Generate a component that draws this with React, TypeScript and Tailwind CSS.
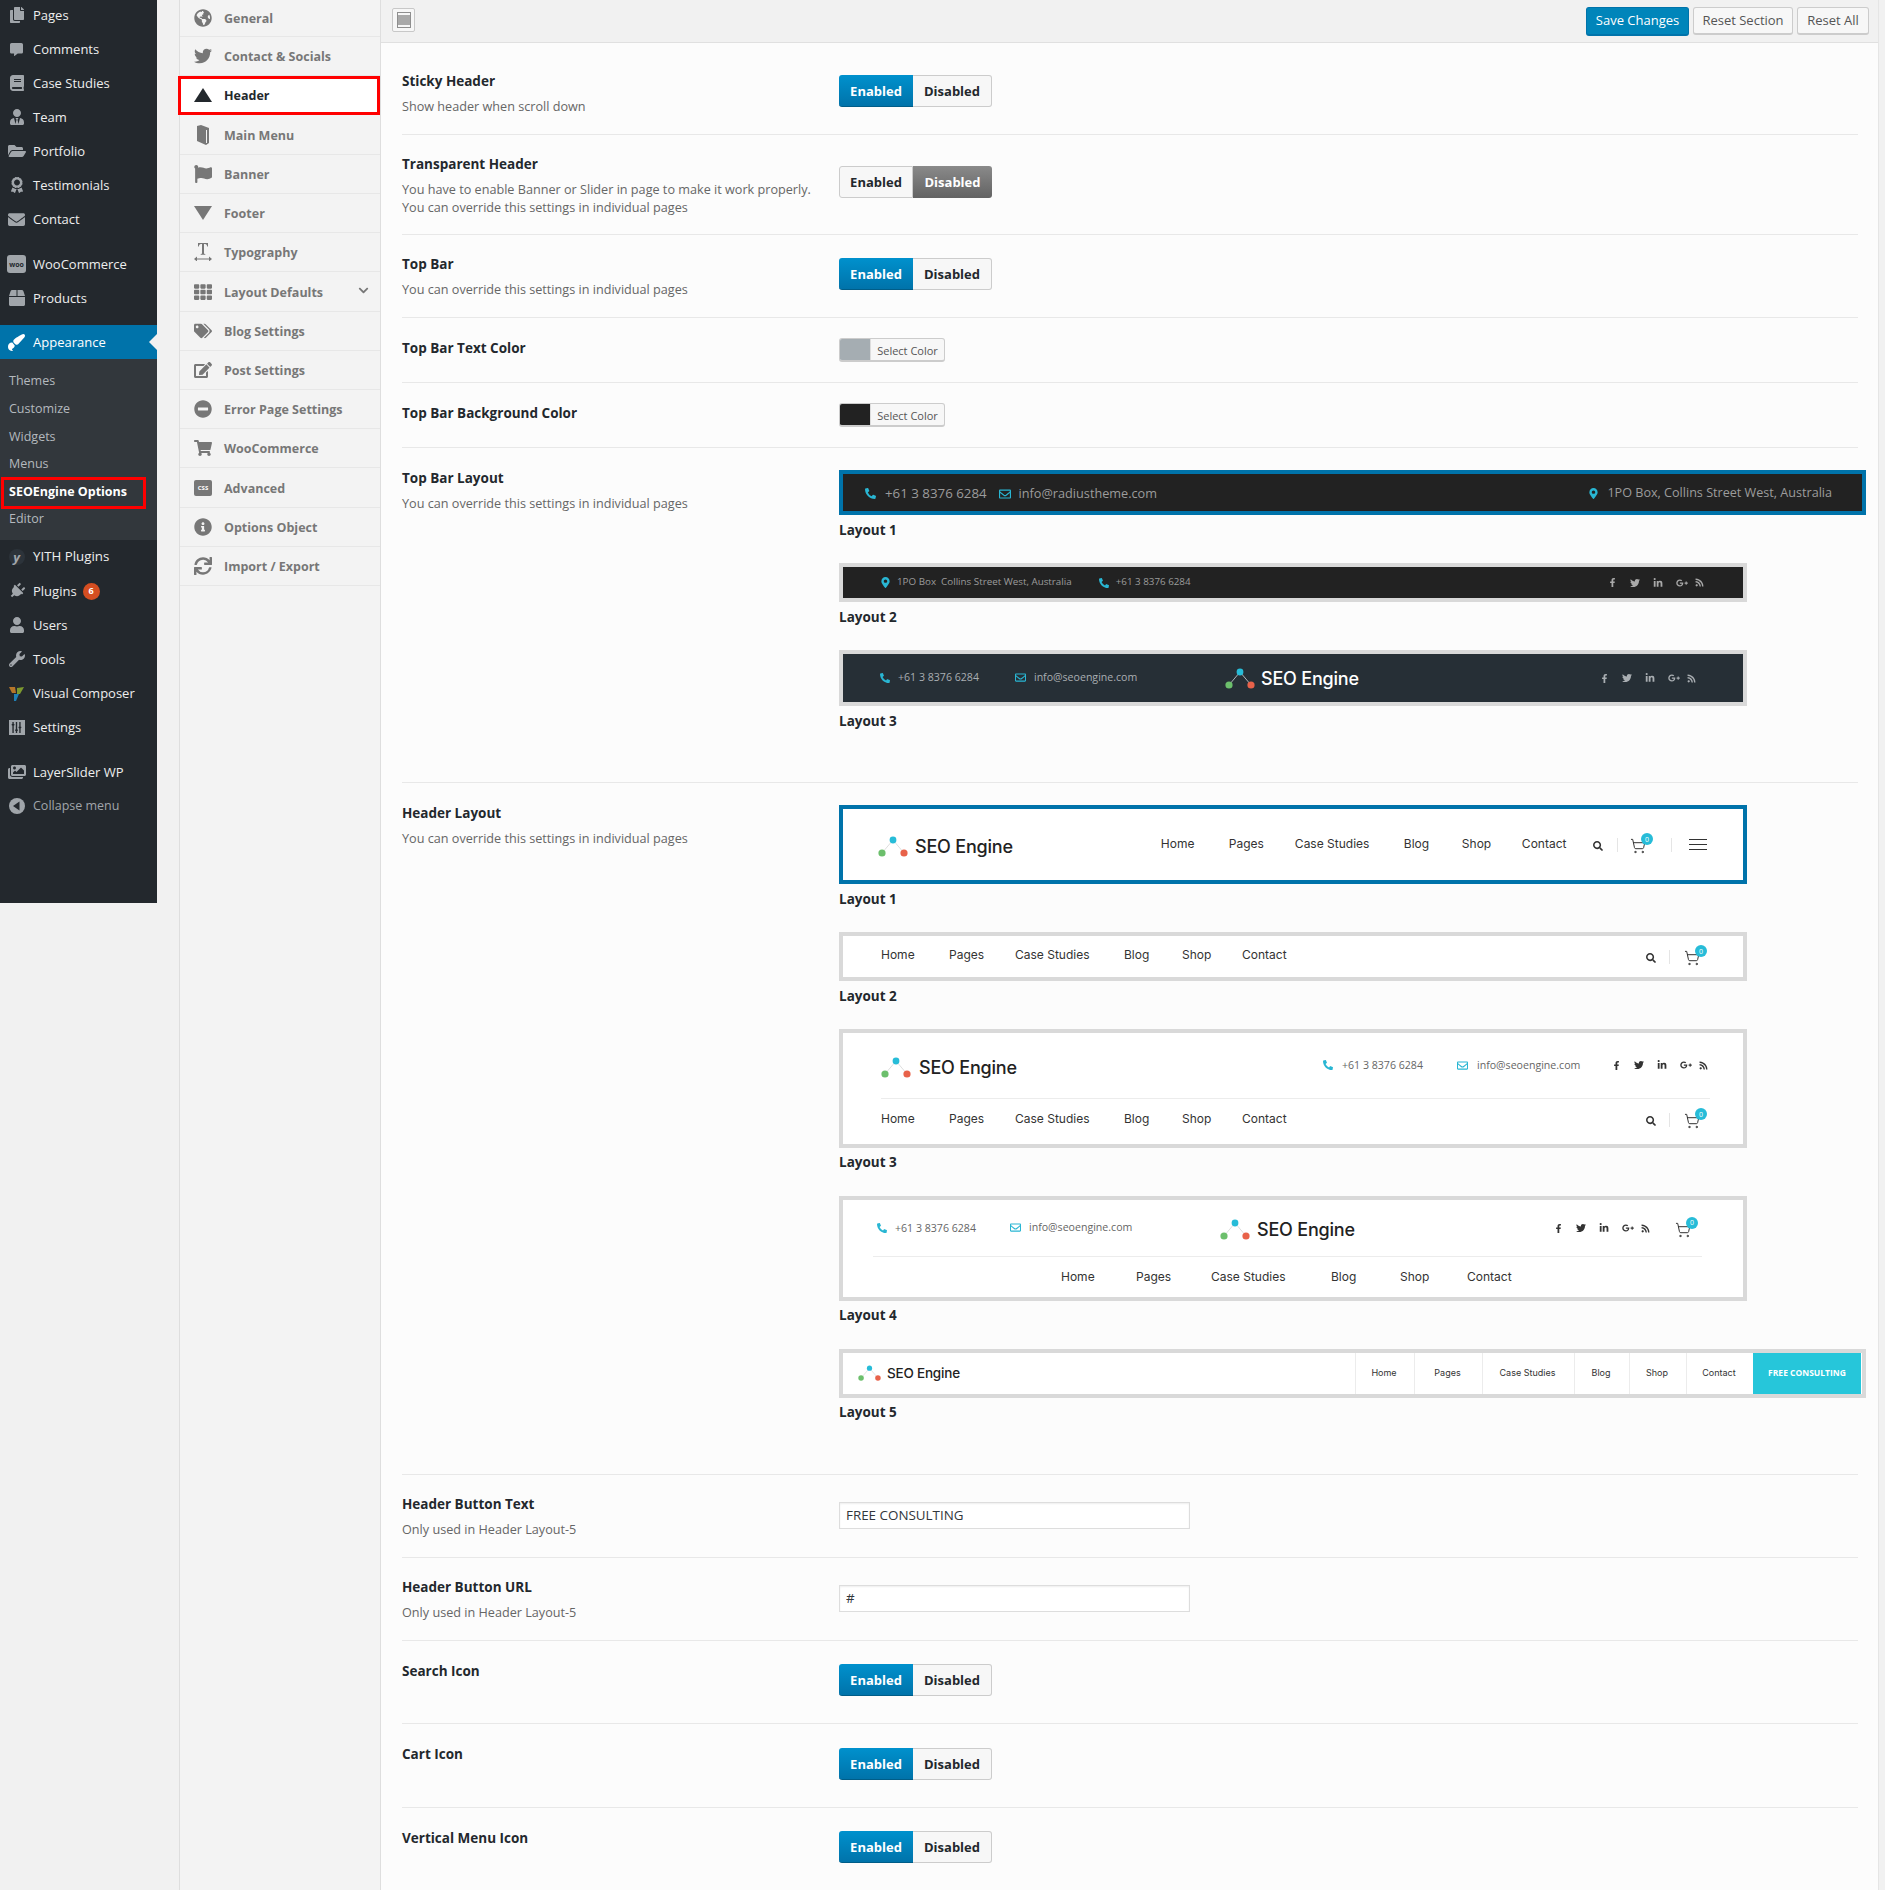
import React from "react";
import {
  FaCopy, FaCommentAlt, FaBook, FaUserTie, FaFolderOpen, FaAward, FaEnvelope, FaBox, FaPaintBrush, FaPlug, FaUser, FaWrench, FaSlidersH, FaImages,
  FaGlobeAmericas, FaTwitter, FaFlag, FaTh, FaTags, FaEdit, FaMinusCircle, FaShoppingCart, FaInfoCircle, FaSync, FaChevronDown,
  FaPhoneAlt, FaRegEnvelope, FaMapMarkerAlt, FaFacebookF, FaLinkedinIn, FaGooglePlusG, FaRss, FaSearch,
} from "react-icons/fa";
import { ShoppingCart } from "lucide-react";

const Tri = ({ down = false }: { down?: boolean }) => (
  <svg viewBox="0 0 18 14" className="w-[18px] h-[14px]" fill="currentColor">
    <path d={down ? "M0 0h18L9 14z" : "M9 0l9 14H0z"} />
  </svg>
);
const TallBook = () => (
  <svg viewBox="0 0 14 20" className="w-[14px] h-[20px]" fill="currentColor">
    <path d="M1 1l4-1 8 3v15l-3 2-9-4z" />
    <path d="M10.5 5v13" stroke="#f3f3f3" strokeWidth="1" />
  </svg>
);
const TypeIcon = () => (
  <svg viewBox="0 0 18 18" className="w-[18px] h-[18px]" fill="currentColor">
    <path d="M4 0h10v3.5h-.8C13 2 12.5 1 11 1h-1v9c0 .7.4 1 1.3 1v.8H6.7V11c.9 0 1.3-.3 1.3-1V1H7C5.500 1 5 2 4.800 3.500H4z" />
    <path d="M0 16l3-2.500v2h12v-2l3 2.500-3 2.500v-2H3v2z" />
  </svg>
);
const Woo = () => (
  <span className="w-[19px] h-[18px] rounded-[3px] bg-[#a0a5aa] text-[#23282d] text-[7px] font-bold flex items-center justify-center leading-none">woo</span>
);
const Yith = () => (
  <span className="w-[16px] h-[16px] rounded-full bg-[#2c333a] text-[#a0a5aa] text-[13px] font-bold italic flex items-center justify-center leading-none">y</span>
);
const VC = () => (
  <svg viewBox="0 0 16 16" className="w-[16px] h-[16px]">
    <path d="M0 2h6l1 6H3z" fill="#b5762a" />
    <path d="M8 3l7-1-4 7H8z" fill="#7d9a2f" />
    <path d="M5 9h5l-3 7H5z" fill="#1f7fb5" />
  </svg>
);
const Collapse = () => (
  <svg viewBox="0 0 16 16" className="w-[16px] h-[16px]">
    <circle cx="8" cy="8" r="8" fill="#a0a5aa" />
    <path d="M10.5 3.500v9L4 8z" fill="#23282d" />
  </svg>
);
const SettingsIcon = () => (
  <span className="w-[16px] h-[15px] bg-[#a0a5aa] text-[#23282d] flex items-center justify-center">
    <FaSlidersH className="text-[11px] rotate-90" />
  </span>
);

const MenuRow = ({ icon, label, extra, cls = "text-[#eeeeee]", text = "text-[13px]" }: { icon: React.ReactNode; label: string; extra?: React.ReactNode; cls?: string; text?: string }) => (
  <div className={"h-[34px] flex items-center " + cls}>
    <span className="w-[33px] flex items-center justify-center text-[#a0a5aa] text-[16px] shrink-0">{icon}</span>
    <span className={"leading-none " + text}>{label}</span>
    {extra}
  </div>
);

const Sidebar = () => (
  <aside className="w-[157px] h-[903px] shrink-0 bg-[#23282d]">
    <div className="-mt-[2px]">
      <MenuRow icon={<FaCopy />} label="Pages" />
      <MenuRow icon={<FaCommentAlt className="text-[13px]" />} label="Comments" />
      <MenuRow icon={<FaBook />} label="Case Studies" />
      <MenuRow icon={<FaUserTie />} label="Team" />
      <MenuRow icon={<FaFolderOpen className="text-[18px]" />} label="Portfolio" />
      <MenuRow icon={<FaAward />} label="Testimonials" />
      <MenuRow icon={<FaEnvelope className="text-[17px]" />} label="Contact" />
    </div>
    <div className="mt-[11px]">
      <MenuRow icon={<Woo />} label="WooCommerce" />
      <MenuRow icon={<FaBox />} label="Products" />
    </div>
    <div className="mt-[10px] relative bg-[#0073aa]">
      <div className="h-[34px] flex items-center text-white">
        <span className="w-[33px] flex items-center justify-center text-white text-[17px]"><FaPaintBrush className="-scale-x-100 rotate-90" /></span>
        <span className="text-[13px] leading-none pt-[1px]">Appearance</span>
      </div>
      <span className="absolute right-0 top-[9px] border-y-[8px] border-y-transparent border-r-[8px] border-r-[#f1f1f1]" />
    </div>
    <div className="bg-[#32373c] h-[181px] pt-[9px] text-[12.5px] text-[#b4b9be]">
      {["Themes", "Customize", "Widgets", "Menus"].map((t) => (
        <div key={t} className="h-[27.6px] flex items-center pl-[9px]">{t}</div>
      ))}
      <div className="relative h-[27.6px] flex items-center pl-[9px] font-bold text-white">
        SEOEngine Options
        <span className="absolute left-[1px] top-[-1px] w-[145px] h-[32px] border-[3px] border-[#ff0000]" />
      </div>
      <div className="h-[27.6px] flex items-center pl-[9px]">Editor</div>
    </div>
    <MenuRow icon={<Yith />} label="YITH Plugins" text="text-[13.3px]" />
    <MenuRow
      icon={<FaPlug className="rotate-45" />}
      label="Plugins"
      extra={<span className="ml-[6px] w-[17px] h-[17px] rounded-full bg-[#d54e21] text-white text-[9px] font-bold flex items-center justify-center">6</span>}
    />
    <MenuRow icon={<FaUser />} label="Users" />
    <MenuRow icon={<FaWrench />} label="Tools" />
    <MenuRow icon={<VC />} label="Visual Composer" />
    <MenuRow icon={<SettingsIcon />} label="Settings" />
    <div className="mt-[11px]">
      <MenuRow icon={<FaImages className="text-[18px]" />} label="LayerSlider WP" />
      <MenuRow icon={<Collapse />} label="Collapse menu" cls="text-[#a0a5aa]" text="text-[12.5px]" />
    </div>
  </aside>
);

const navItems: { label: string; icon: React.ReactNode; h: string; active?: boolean; chev?: boolean }[] = [
  { label: "General", icon: <FaGlobeAmericas />, h: "h-[37px]" },
  { label: "Contact & Socials", icon: <FaTwitter />, h: "h-[39px]" },
  { label: "Header", icon: <Tri />, h: "h-[39px]", active: true },
  { label: "Main Menu", icon: <TallBook />, h: "h-[40px]" },
  { label: "Banner", icon: <FaFlag />, h: "h-[39px]" },
  { label: "Footer", icon: <Tri down />, h: "h-[39px]" },
  { label: "Typography", icon: <TypeIcon />, h: "h-[39px]" },
  { label: "Layout Defaults", icon: <FaTh />, h: "h-[40px]", chev: true },
  { label: "Blog Settings", icon: <FaTags />, h: "h-[39px]" },
  { label: "Post Settings", icon: <FaEdit />, h: "h-[39px]" },
  { label: "Error Page Settings", icon: <FaMinusCircle />, h: "h-[39px]" },
  { label: "WooCommerce", icon: <FaShoppingCart />, h: "h-[39px]" },
  { label: "Advanced", icon: <span className="w-[18px] h-[16px] rounded-[2px] bg-[#777] text-white text-[6px] font-bold flex items-center justify-center leading-none">CSS</span>, h: "h-[40px]" },
  { label: "Options Object", icon: <FaInfoCircle />, h: "h-[39px]" },
  { label: "Import / Export", icon: <FaSync />, h: "h-[39px]" },
];

const OptionsNav = () => (
  <nav className="w-[202px] shrink-0 ml-[22px] min-h-[1890px] bg-[#f3f3f3] border-l border-r border-[#dedede]">
    {navItems.map((n) => (
      <div
        key={n.label}
        className={
          "relative flex items-center border-b border-[#e7e7e7] " + n.h + " " + (n.active ? "bg-white text-[#23282d]" : "text-[#777777]")
        }
      >
        <span className="w-[44px] flex items-center justify-center text-[18px] shrink-0 pl-[2px]">{n.icon}</span>
        <span className="text-[12.5px] font-bold leading-none pt-[3px]">{n.label}</span>
        {n.chev && <FaChevronDown className="absolute right-[11px] top-[13px] text-[11px]" />}
        {n.active && <span className="absolute left-[-2px] top-0 w-[202px] h-[39px] border-[3px] border-[#ff0000]" />}
      </div>
    ))}
  </nav>
);

const Toggle = ({ on = true }: { on?: boolean }) => (
  <div className="flex w-[153px] h-[32px] text-[13px] font-bold leading-none">
    <div
      className={
        "w-[74px] flex items-center justify-center rounded-l-[3px] pt-[1px] " +
        (on ? "bg-gradient-to-b from-[#0091cd] to-[#0073aa] text-white border-b border-[#005d88]" : "bg-[#f7f7f7] border border-[#cccccc] text-[#23282d]")
      }
    >
      Enabled
    </div>
    <div
      className={
        "flex-1 flex items-center justify-center rounded-r-[3px] pt-[1px] " +
        (on ? "bg-[#f7f7f7] border border-l-0 border-[#cccccc] text-[#23282d]" : "bg-gradient-to-b from-[#8a8a8a] to-[#636363] text-white")
      }
    >
      Disabled
    </div>
  </div>
);

const ColorPick = ({ swatch }: { swatch: string }) => (
  <div className="flex w-[106px] h-[24px] rounded-[3px] border border-[#cccccc] border-b-[2px] bg-[#f7f7f7] overflow-hidden">
    <span className={"w-[30px] " + swatch} />
    <span className="flex-1 border-l border-[#dddddd] text-[11px] text-[#555555] flex items-center justify-center pt-[3px]">Select Color</span>
  </div>
);

const TextInput = ({ value }: { value: string }) => (
  <input
    readOnly
    value={value}
    className="w-[351px] h-[27px] bg-white border border-[#dddddd] shadow-[inset_0_1px_2px_rgba(0,0,0,0.07)] pl-[6px] pb-[1px] text-[13.4px] text-[#32373c] outline-none"
  />
);

const Row = ({
  h, lt, ct, label, desc, children, last,
}: { h: string; lt: string; ct: string; label: string; desc?: React.ReactNode; children: React.ReactNode; last?: boolean }) => (
  <div className={"flex " + h + (last ? "" : " border-b border-[#e8e8e8]")}>
    <div className={"w-[437px] shrink-0 " + lt}>
      <div className="text-[13.5px] font-bold leading-[20px] text-[#23282d]">{label}</div>
      {desc && <div className="mt-[6px] text-[12.65px] leading-[18px] text-[#666666]">{desc}</div>}
    </div>
    <div className={"flex-1 min-w-0 " + ct}>{children}</div>
  </div>
);

const Block = ({ label, box, children, up }: { label: string; box: string; children: React.ReactNode; up?: boolean }) => (
  <div className="flex flex-col gap-[5px]">
    <div className={"box-border border-[4px] overflow-hidden " + box}>{children}</div>
    <div className={"text-[13.5px] font-bold leading-[20px] text-[#23282d]" + (up ? " -mt-[1px] mb-[1px]" : "")}>{label}</div>
  </div>
);

const Logo = ({ dark = false, svg, text, gap }: { dark?: boolean; svg: string; text: string; gap: string }) => (
  <div className={"flex items-center " + gap}>
    <svg viewBox="0 0 30 22" className={svg}>
      <path d="M15 4L4 17M15 4l11 13" stroke={dark ? "#cfd4d8" : "#d5d5d5"} strokeWidth="0.8" fill="none" />
      <circle cx="15" cy="4" r="3.4" fill="#27bcd8" />
      <circle cx="4" cy="17" r="3.6" fill="#6cbf6c" />
      <circle cx="26" cy="17" r="3.6" fill="#e8624a" />
    </svg>
    <span className={"font-['Inter',sans-serif] font-medium leading-none tracking-[-0.2px] " + text + (dark ? " text-white" : " text-[#222222]")}>SEO Engine</span>
  </div>
);

const Phone = ({ cls = "" }: { cls?: string }) => <FaPhoneAlt className={"text-[#29b6d3] " + cls} />;
const Mail = ({ cls = "" }: { cls?: string }) => <FaRegEnvelope className={"text-[#29b6d3] " + cls} />;
const Pin = ({ cls = "" }: { cls?: string }) => <FaMapMarkerAlt className={"text-[#29b6d3] " + cls} />;

const Social = ({ cls, w }: { cls: string; w: string[] }) => (
  <div className={"flex items-center text-[10px] " + cls}>
    <span className={w[0]}><FaFacebookF className="text-[9px]" /></span>
    <span className={w[1]}><FaTwitter /></span>
    <span className={w[2]}><FaLinkedinIn /></span>
    <span className={w[3]}><FaGooglePlusG className="text-[12px]" /></span>
    <FaRss className="text-[9px]" />
  </div>
);

const Nav = ({ w, cls = "text-[12px]" }: { w: string[]; cls?: string }) => (
  <div className={"flex items-center font-['Inter',sans-serif] text-[#333333] leading-none " + cls}>
    {["Home", "Pages", "Case Studies", "Blog", "Shop", "Contact"].map((t, i) => (
      <span key={t} className={w[i] + " shrink-0 whitespace-nowrap"}>{t}</span>
    ))}
  </div>
);

const Cart = () => (
  <span className="relative inline-flex w-[16px] h-[16px] text-[#333333] mt-[3px]">
    <ShoppingCart className="w-[16px] h-[16px]" strokeWidth={1.5} />
    <span className="absolute left-[11px] top-[-5px] w-[12px] h-[12px] rounded-full bg-[#27bcd8] text-white text-[7px] flex items-center justify-center leading-none">0</span>
  </span>
);

const navW1 = ["w-[68px]", "w-[66px]", "w-[109px]", "w-[58px]", "w-[60px]", "w-[50px]"];
const navW4 = ["w-[75px]", "w-[75px]", "w-[120px]", "w-[69px]", "w-[67px]", "w-[50px]"];
const socW = ["w-[22px]", "w-[23px]", "w-[23px]", "w-[19px]"];

const SearchCart = () => (
  <div className="flex items-center text-[#333333]">
    <FaSearch className="text-[10px] mt-[2px]" />
    <span className="w-px h-[14px] bg-[#e5e5e5] ml-[13px]" />
    <span className="ml-[14px] flex"><Cart /></span>
  </div>
);

const TopBarLayouts = () => (
  <div className="flex flex-col gap-[23px]">
    <Block label="Layout 1" box="w-[1027px] h-[45px] border-[#0073aa] bg-[#222222]">
      <div className="h-full flex items-center justify-between pl-[22px] pr-[30px] pt-[2px] text-[13px] text-[#9c9c9c]">
        <div className="flex items-center">
          <Phone cls="text-[11px]" />
          <span className="ml-[9px] text-[13.3px]">+61 3 8376 6284</span>
          <Mail cls="ml-[12px] text-[12px]" />
          <span className="ml-[8px] text-[12.7px]">info@radiustheme.com</span>
        </div>
        <div className="flex items-center">
          <Pin cls="text-[11px]" />
          <span className="ml-[8px] text-[12.6px]">1PO Box, Collins Street West, Australia</span>
        </div>
      </div>
    </Block>
    <Block label="Layout 2" box="w-[908px] h-[39px] border-[#d9d9d9] bg-[#222222]">
      <div className="h-full flex items-center justify-between pl-[37px] pr-[39px] text-[9.8px] text-[#9c9c9c]">
        <div className="flex items-center">
          <Pin cls="text-[11px]" />
          <span className="ml-[6px]">1PO Box&nbsp; Collins Street West, Australia</span>
          <Phone cls="ml-[27px] text-[10px]" />
          <span className="ml-[7px]">+61 3 8376 6284</span>
        </div>
        <Social cls="text-[#a9a9a9]" w={socW} />
      </div>
    </Block>
    <Block label="Layout 3" box="w-[908px] h-[56px] border-[#d9d9d9] bg-[#262f36]">
      <div className="h-full flex items-center pl-[37px] pr-[47px] text-[10.6px] text-[#a9aeb2]">
        <div className="flex items-center w-[345px] shrink-0">
          <Phone cls="text-[10px]" />
          <span className="ml-[8px]">+61 3 8376 6284</span>
          <Mail cls="ml-[36px] text-[11px]" />
          <span className="ml-[8px]">info@seoengine.com</span>
        </div>
        <Logo dark svg="w-[30px] h-[22px]" text="text-[18px]" gap="gap-[6px] mb-[-2px]" />
        <div className="ml-auto"><Social cls="text-[#a9aeb2]" w={socW} /></div>
      </div>
    </Block>
  </div>
);

const HeaderLayouts = () => (
  <div className="flex flex-col gap-[23px]">
    <Block label="Layout 1" box="w-[908px] h-[79px] border-[#0073aa] bg-white">
      <div className="h-full flex items-center pl-[35px] pr-[36px]">
        <Logo svg="w-[30px] h-[22px]" text="text-[18px]" gap="gap-[7px] mt-[4px]" />
        <div className="ml-[148px] pb-[1px]"><Nav w={navW1} /></div>
        <div className="ml-auto flex items-center text-[#333333]">
          <FaSearch className="text-[10px] mt-[3px]" />
          <span className="w-px h-[14px] bg-[#e5e5e5] ml-[14px]" />
          <span className="ml-[12px] flex"><Cart /></span>
          <span className="w-px h-[14px] bg-[#e5e5e5] ml-[25px]" />
          <span className="ml-[17px] flex flex-col gap-[4px] w-[18px]">
            <span className="h-px bg-[#333333]" /><span className="h-px bg-[#333333]" /><span className="h-px bg-[#333333]" />
          </span>
        </div>
      </div>
    </Block>
    <Block label="Layout 2" box="w-[908px] h-[49px] border-[#d9d9d9] bg-white">
      <div className="h-full flex items-center justify-between pl-[38px] pr-[43px]">
        <div className="pb-[3px]"><Nav w={navW1} /></div>
        <SearchCart />
      </div>
    </Block>
    <Block label="Layout 3" up box="w-[908px] h-[119px] border-[#d9d9d9] bg-white">
      <div className="flex flex-col h-full ml-[38px] mr-[33px]">
        <div className="h-[66px] shrink-0 flex items-center justify-between border-b border-[#ececec]">
          <Logo svg="w-[30px] h-[22px]" text="text-[18px]" gap="gap-[8px] mt-[4px]" />
          <div className="flex items-center text-[10.6px] text-[#666666] pr-[2px]">
            <Phone cls="text-[10px]" />
            <span className="ml-[9px] w-[115px]">+61 3 8376 6284</span>
            <Mail cls="text-[11px]" />
            <span className="ml-[9px] w-[135px]">info@seoengine.com</span>
            <Social cls="text-[#333333]" w={socW} />
          </div>
        </div>
        <div className="flex-1 flex items-center justify-between pb-[4px] pr-[10px]">
          <div className="pb-[1px]"><Nav w={navW1} /></div>
          <SearchCart />
        </div>
      </div>
    </Block>
    <Block label="Layout 4" up box="w-[908px] h-[105px] border-[#d9d9d9] bg-white">
      <div className="flex flex-col h-full ml-[30px] mr-[41px]">
        <div className="h-[57px] shrink-0 flex items-center border-b border-[#ececec] pl-[4px]">
          <div className="flex items-center text-[10.6px] text-[#666666] w-[343px] shrink-0">
            <Phone cls="text-[10px]" />
            <span className="ml-[8px] w-[115px] mt-[1px]">+61 3 8376 6284</span>
            <Mail cls="text-[11px]" />
            <span className="ml-[8px]">info@seoengine.com</span>
          </div>
          <Logo svg="w-[30px] h-[22px]" text="text-[18px]" gap="gap-[7px] mt-[4px]" />
          <div className="ml-auto flex items-center pr-[11px]">
            <Social cls="text-[#333333]" w={socW} />
            <span className="ml-[25px] flex"><Cart /></span>
          </div>
        </div>
        <div className="flex-1 flex items-center pl-[188px]">
          <Nav w={navW4} />
        </div>
      </div>
    </Block>
    <Block label="Layout 5" up box="w-[1027px] h-[49px] border-[#d9d9d9] bg-white">
      <div className="h-full flex items-stretch">
        <div className="w-[512px] flex items-center pl-[15px]">
          <Logo svg="w-[23px] h-[17px]" text="text-[13.5px]" gap="gap-[6px]" />
        </div>
        {[
          ["Home", "w-[59px]"], ["Pages", "w-[68px]"], ["Case Studies", "w-[92px]"], ["Blog", "w-[55px]"], ["Shop", "w-[57px]"], ["Contact", "w-[67px]"],
        ].map(([t, w]) => (
          <div key={t} className={"border-l border-[#ececec] flex items-center justify-center pb-[2px] pr-[2px] font-['Inter',sans-serif] text-[9px] text-[#333333] " + w}>{t}</div>
        ))}
        <div className="w-[108px] bg-[#26c6da] flex items-center justify-center text-white text-[8.5px] font-bold whitespace-nowrap">FREE CONSULTING</div>
      </div>
    </Block>
  </div>
);

const Btn = ({ children, w }: { children: React.ReactNode; w: string }) => (
  <button className={"h-[28px] rounded-[3px] border border-[#cccccc] border-b-[2px] bg-[#f7f7f7] text-[13px] text-[#555555] leading-none " + w}>{children}</button>
);

const YOU = "You can override this settings in individual pages";
const ONLY = "Only used in Header Layout-5";

const Main = () => (
  <main className="w-[1498px] shrink-0 min-h-[1890px] bg-[#fcfcfc] border-r border-[#e5e5e5]">
    <div className="h-[43px] bg-[#f1f1f1] border-b border-[#e0e0e0] flex items-center justify-between pl-[11px] pr-[9px]">
      <span className="w-[23px] h-[24px] mb-[2px] rounded-[2px] border border-[#c8c8c8] bg-[#f7f7f7] flex items-center justify-center">
        <span className="w-[14px] h-[16px] border border-[#8f8f8f] bg-[#f7f7f7] py-[2px] flex"><span className="flex-1 bg-[#a9a9a9]" /></span>
      </span>
      <div className="flex items-center gap-[4px]">
        <button className="w-[103px] h-[29px] rounded-[3px] bg-[#0085ba] border border-[#0073aa] border-b-[2px] text-white text-[13px] leading-none">Save Changes</button>
        <Btn w="w-[100px]">Reset Section</Btn>
        <Btn w="w-[72px]">Reset All</Btn>
      </div>
    </div>
    <div className="ml-[21px] mr-[20px]">
      <Row h="h-[92px]" lt="pt-[28px]" ct="pt-[32px]" label="Sticky Header" desc="Show header when scroll down"><Toggle /></Row>
      <Row
        h="h-[100px]" lt="pt-[19px]" ct="pt-[31px]" label="Transparent Header"
        desc={<>You have to enable Banner or Slider in page to make it work properly.<br />{YOU}</>}
      >
        <Toggle on={false} />
      </Row>
      <Row h="h-[83px]" lt="pt-[19px]" ct="pt-[23px]" label="Top Bar" desc={YOU}><Toggle /></Row>
      <Row h="h-[65px]" lt="pt-[20px]" ct="pt-[20px]" label="Top Bar Text Color"><ColorPick swatch="bg-[#a5adb2]" /></Row>
      <Row h="h-[65px]" lt="pt-[20px]" ct="pt-[20px]" label="Top Bar Background Color"><ColorPick swatch="bg-[#222222]" /></Row>
      <Row h="h-[335px]" lt="pt-[20px]" ct="pt-[22px]" label="Top Bar Layout" desc={YOU}><TopBarLayouts /></Row>
      <Row h="h-[692px]" lt="pt-[20px]" ct="pt-[22px]" label="Header Layout" desc={YOU}><HeaderLayouts /></Row>
      <Row h="h-[83px]" lt="pt-[19px]" ct="pt-[27px]" label="Header Button Text" desc={ONLY}><TextInput value="FREE CONSULTING" /></Row>
      <Row h="h-[83px]" lt="pt-[19px]" ct="pt-[27px]" label="Header Button URL" desc={ONLY}><TextInput value="#" /></Row>
      <Row h="h-[83px]" lt="pt-[20px]" ct="pt-[23px]" label="Search Icon"><Toggle /></Row>
      <Row h="h-[84px]" lt="pt-[20px]" ct="pt-[24px]" label="Cart Icon"><Toggle /></Row>
      <Row h="h-[82px]" lt="pt-[20px]" ct="pt-[23px]" label="Vertical Menu Icon" last><Toggle /></Row>
    </div>
  </main>
);

export default function App() {
  return (
    <div className="flex items-start w-[1885px] h-[1890px] overflow-hidden bg-[#f1f1f1] font-['Open_Sans','Liberation_Sans',sans-serif]">
      <Sidebar />
      <OptionsNav />
      <Main />
    </div>
  );
}
